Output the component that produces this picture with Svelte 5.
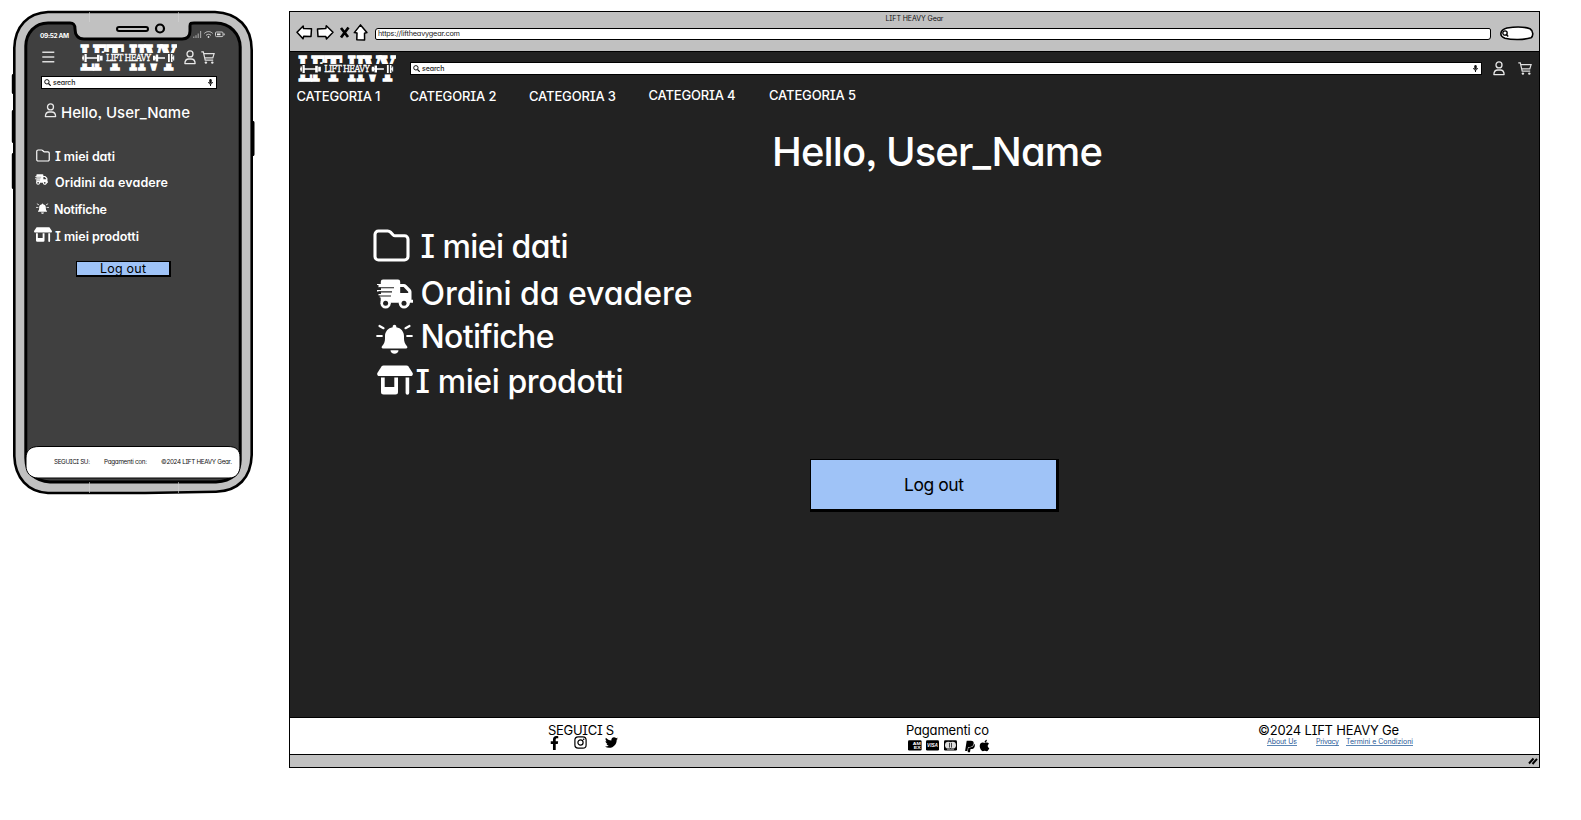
<script>
  const categories = [
    { label: 'CATEGORIA 1', w: 84 },
    { label: 'CATEGORIA 2', w: 87 },
    { label: 'CATEGORIA 3', w: 87 },
    { label: 'CATEGORIA 4', w: 87 },
    { label: 'CATEGORIA 5', w: 87 }
  ];
  const desktopMenu = [
    { icon: 'folder', label: 'I miei dati', w: 148 },
    { icon: 'truck', label: 'Ordini da evadere', w: 272 },
    { icon: 'bell', label: 'Notifiche', w: 134 },
    { icon: 'store', label: 'I miei prodotti', w: 208 }
  ];
  const phoneMenu = [
    { icon: 'folder', label: 'I miei dati', w: 60 },
    { icon: 'truck', label: 'Oridini da evadere', w: 113 },
    { icon: 'bell', label: 'Notifiche', w: 53 },
    { icon: 'store', label: 'I miei prodotti', w: 84 }
  ];

  // Tracks a label out or in so that it takes up the given width.
  function fit(node, width) {
    const n = node.textContent.length;
    const natural = node.getBoundingClientRect().width;
    node.style.letterSpacing = `${(width - natural) / (n - 1)}px`;
    node.style.marginRight = `${-(width - natural) / (n - 1)}px`;
  }
</script>

{#snippet logo()}
  <svg class="logo" viewBox="0 0 98 27" preserveAspectRatio="none">
    <g class="slab">
      <text x="1" y="26" textLength="14" lengthAdjust="spacingAndGlyphs">L</text>
      <text x="13.500" y="26" textLength="13.500" lengthAdjust="spacingAndGlyphs">F</text>
      <text x="27.500" y="26" textLength="17" lengthAdjust="spacingAndGlyphs">T</text>
      <text x="50" y="26" textLength="17" lengthAdjust="spacingAndGlyphs">H</text>
      <text x="66" y="26" textLength="17" lengthAdjust="spacingAndGlyphs">V</text>
      <text x="81.500" y="26" textLength="16" lengthAdjust="spacingAndGlyphs">Y</text>
    </g>
    <rect class="band" x="0" y="9" width="98" height="10.400" />
    <text class="small" x="27" y="17.400" textLength="45" lengthAdjust="spacing">LIFT HEAVY</text>
    <path d="M3 14h2M7 14h12M74 14h12M93 14h2" stroke="#fff" stroke-width="1.400" />
    <path d="M3.500 11.500h1.300v5H3.500zM5.500 10h2.200v8H5.500zM18 10.800h2.600v6.600H18zM21 11.800h2.600v4.600H21zM74 11.800h2.400v4.600H74zM76.800 10.600h2.400v7h-2.400zM89 10h1.800v8H89zM92 10h1.500v8H92zM94.200 11.500h1v5h-1z" fill="#fff" />
  </svg>
{/snippet}

{#snippet icon(name)}
  {#if name === 'folder'}
    <svg class="icon folder" viewBox="0 0 37 33"><path d="M5.500 2h9.200c1.200 0 2 .4 2.800 1.200l2.700 2.800c.5.5 1 .7 1.800.7h9.500a3.500 3.500 0 0 1 3.500 3.500v17.300a3.500 3.500 0 0 1-3.500 3.500h-26A3.500 3.500 0 0 1 2 27.500V5.500A3.500 3.500 0 0 1 5.500 2z" fill="none" stroke="#fff" stroke-width="3.100" /></svg>
  {:else if name === 'truck'}
    <svg class="icon truck" viewBox="0 0 36 30"><path d="M6 .5h15a2.200 2.200 0 0 1 2.200 2.200V5h3.600c1 0 1.800.3 2.500 1l4.200 4.300c.7.7 1 1.500 1 2.500v8h1a1 1 0 0 1 0 3h-2.600a5 5 0 0 1-10 0h-9.500a5 5 0 0 1-9.700-.8V18.500h-1v-1.900H1.500v-1.600H4v-2.400H0V11h4V8.500H1.500V6H0V5h3.800V2.700A2.200 2.200 0 0 1 6 .5zM23.200 8v6h8v-1.200L26.600 8z" fill="#fff" fill-rule="evenodd" /><path d="M1.500 8.700H17M1.500 12.900H15M1.500 17H14" class="slit" stroke-width="1.100" /><circle cx="8.600" cy="24.300" r="5.200" fill="#fff" /><circle cx="27" cy="24.300" r="5.200" fill="#fff" /><circle class="hub" cx="8.600" cy="24.300" r="2.500" /><circle class="hub" cx="27" cy="24.300" r="2.500" /></svg>
  {:else if name === 'bell'}
    <svg class="icon bell" viewBox="0 0 37 30"><path d="M18.500.8c1 0 1.800.8 1.800 1.800v.6c4.800.8 7.700 4.500 7.700 9v2.600c0 3 1 5.200 3 7.500.8.900.3 2.300-1 2.300H7c-1.300 0-1.800-1.400-1-2.300 2-2.300 3-4.500 3-7.500v-2.600c0-4.500 2.900-8.200 7.700-9v-.6c0-1 .8-1.800 1.800-1.800zM14.500 26.300h8c0 2-1.800 3.500-4 3.500s-4-1.500-4-3.500z" fill="#fff" /><path d="M3.500 2l4 2.200M33.500 2l-4 2.200M1.200 12h4.600M31.200 12h4.600" stroke="#fff" stroke-width="2.200" stroke-linecap="round" /></svg>
  {:else if name === 'store'}
    <svg class="icon store" viewBox="0 0 36 30"><path d="M6.500.5h23c.9 0 1.500.3 2 1l4 6.200c.9 1.500 0 3.300-1.800 3.300H2.300C.5 11-.4 9.200.5 7.700l4-6.200c.5-.7 1.100-1 2-1z" fill="#fff" /><path d="M4 12.500h3.700V22h9.600v-9.500H21V27a2.500 2.500 0 0 1-2.500 2.500h-12A2.500 2.500 0 0 1 4 27zM28.600 12.500h3.600V28a1.800 1.800 0 0 1-3.600 0z" fill="#fff" /></svg>
  {:else if name === 'user'}
    <svg class="icon user" viewBox="0 0 12 15"><circle cx="6" cy="3.900" r="3" fill="none" stroke="#e8e8e8" stroke-width="1.300" /><path d="M.9 13.600c0-3 1.700-4.600 4-4.600h2.200c2.300 0 4 1.600 4 4.600z" fill="none" stroke="#e8e8e8" stroke-width="1.300" stroke-linejoin="round" /></svg>
  {:else if name === 'cart'}
    <svg class="icon cart" viewBox="0 0 14 13"><path d="M.3.900h2l1.900 8.300h8M2.800 2.600h10.300l-1.300 4.300H3.800" fill="none" stroke="#e0e0e0" stroke-width="1.200" /><circle cx="4.900" cy="11.600" r="1.200" fill="#e8e8e8" /><circle cx="11.300" cy="11.600" r="1.200" fill="#e8e8e8" /></svg>
  {:else if name === 'glass'}
    <svg class="icon glass" viewBox="0 0 7 7"><circle cx="2.900" cy="2.800" r="2.200" fill="none" stroke="#111" stroke-width="1" /><path d="M4.500 4.500l2.200 2.200" stroke="#111" stroke-width="1.200" /></svg>
  {:else if name === 'mic'}
    <svg class="icon mic" viewBox="0 0 5 7"><path d="M1.300 1.200a1.200 1.200 0 0 1 2.400 0v2.100a1.200 1.200 0 0 1-2.400 0z" fill="#111" /><path d="M.5 3c0 2.600 4 2.600 4 0M2.500 5v2" fill="none" stroke="#111" stroke-width="1" /></svg>
  {/if}
{/snippet}

{#snippet search()}
  <div class="search">
    {@render icon('glass')}
    <span use:fit={22.500}>search</span>
    {@render icon('mic')}
  </div>
{/snippet}

<main>
  <section class="phone">
    <svg class="frame" viewBox="0 0 256 496">
      <path d="M13.500 75.500v17M13.500 111.500v30M13.500 154.500v33M252.800 122.500v32" stroke="#000" stroke-width="3.400" stroke-linecap="round" />
      <path d="M48 12H215C238 13 251.700 27 251.700 50V455C251 478 238 491 216 491.800L145 493H48C28 492 15 478 14.300 456V48C15 26 28 13 48 12z" fill="#c1c1c1" stroke="#000" stroke-width="2.600" />
      <path d="M48 23H70C74 23 75 25 75 29C75 35 78 39 84 39H182C188 39 190 36 190 31V26C190 23 191 23 194 23H216C230 23 240 34 240.200 47V460C240 474 231 481 216 482H50C35 481 26 473 25.800 458V46C26 33 35 23 48 23z" fill="#404040" stroke="#000" stroke-width="3" />
      <rect x="117" y="27" width="31" height="4" rx="2" fill="#c1c1c1" stroke="#000" stroke-width="2" />
      <circle cx="160" cy="28.500" r="4" fill="#c1c1c1" stroke="#000" stroke-width="2.200" />
      <path d="M26 458C26 450 31 446.500 39 446.500H228C236 446.500 240 450 240 457V466C240 473 236 478 229 478H38C31 478 26 473 26 466z" fill="#fff" stroke="#000" stroke-width="1" />
      <path d="M89.500 12V22M178.500 12V22M89.500 482V493M178.500 482V493" stroke="#d4d4d4" stroke-width=".6" />
    </svg>
    <div class="status">
      <b use:fit={29}>09:52 AM</b>
      <svg width="32" height="9" viewBox="0 0 32 9">
        <path d="M.8 8V6.500M3 8V5.200M5.200 8V3.400M7.600 8V1" stroke="#a5a5a5" stroke-width="1.100" />
        <path d="M11.300 3.400c2.600-2.400 5.800-2.400 8.400 0M13 5.400c1.700-1.500 3.300-1.500 5 0" fill="none" stroke="#c8c8c8" stroke-width="1" /><circle cx="15.500" cy="7" r=".9" fill="#ddd" />
        <rect x="22.500" y="2" width="7.500" height="4.600" rx="1" fill="none" stroke="#ccc" /><path d="M24 3.500h3.500v1.700H24zM30.700 3.500h.9v1.700h-.9z" fill="#eee" />
      </svg>
    </div>
    <div class="top">
      <svg class="burger" width="13" height="12" viewBox="0 0 13 12"><path d="M.3 1.300h12M.3 6h12M.3 10.700h12" stroke="#ddd" stroke-width="1.400" /></svg>
      {@render logo()}
      {@render icon('user')}
      {@render icon('cart')}
    </div>
    {@render search()}
    <h2>{@render icon('user')}<span use:fit={129}>Hello, User_Name</span></h2>
    <ul>
      {#each phoneMenu as item}
        <li class={item.icon}><i>{@render icon(item.icon)}</i><span use:fit={item.w}>{item.label}</span></li>
      {/each}
    </ul>
    <button><span use:fit={46}>Log out</span></button>
    <footer>
      <span use:fit={36}>SEGUICI SU:</span>
      <span use:fit={43}>Pagamenti con:</span>
      <span use:fit={71}>©2024 LIFT HEAVY Gear.</span>
    </footer>
  </section>

  <section class="browser">
    <header class="chrome">
      <div class="title"><span use:fit={58}>LIFT HEAVY Gear</span></div>
      <div class="toolbar">
        <svg class="controls" width="72" height="17" viewBox="0 0 72 17">
          <g fill="#fff" stroke="#000" stroke-width="1.500" stroke-linejoin="round">
            <path d="M1 8.300L7.200 2L7.500 4.600L15.500 4.800L15 12.400L7.700 12.200L7 14.800z" />
            <path d="M37 8.300L30.300 1.700L29.800 4.600L21.500 5L22 12.600L29.800 12.500L30.500 15z" />
            <path d="M64.500 .9L58.300 8.600L61 9L60.800 15.800L68.600 15.900L68.500 9.200L70.900 8.600z" />
          </g>
          <path d="M45 4L52 13M52.500 3.500L45 13.500" stroke="#000" stroke-width="2.700" />
        </svg>
        <div class="url"><span use:fit={82}>https://liftheavygear.com</span></div>
        <svg width="35" height="15" viewBox="0 0 35 15">
          <path d="M8 2C17 .4 25 .6 31 2.800C34.500 5 34.500 10 32 11.800C25 14 13 14 6 12.300C0 10 .5 4 8 2z" fill="#fff" stroke="#000" stroke-width="1.600" /><circle cx="6" cy="7" r="2.200" fill="none" stroke="#000" stroke-width="1.300" /><path d="M7 8l2.200 2.500" stroke="#000" stroke-width="1.400" />
        </svg>
      </div>
    </header>
    <div class="page">
      <div class="appbar">
        {@render logo()}
        {@render search()}
        {@render icon('user')}
        {@render icon('cart')}
      </div>
      <nav>
        {#each categories as c, i}
          <div class:raised={i > 2}><span use:fit={c.w}>{c.label}</span></div>
        {/each}
      </nav>
      <h1><span use:fit={331}>Hello, User_Name</span></h1>
      <ul>
        {#each desktopMenu as item}
          <li class={item.icon}><i>{@render icon(item.icon)}</i><span use:fit={item.w}>{item.label}</span></li>
        {/each}
      </ul>
      <button><span use:fit={61}>Log out</span></button>
    </div>
    <footer>
      <div class="social">
        <span use:fit={66}>SEGUICI S</span>
        <div>
          <svg class="fb" width="9" height="14" viewBox="0 0 320 512"><path d="M279.140 288l14.220-92.660h-88.910v-60.130c0-25.350 12.420-50.060 52.240-50.060h40.420V6.260S260.430 0 225.360 0c-73.220 0-121.080 44.380-121.080 124.720v70.620H22.890V288h81.390v224h100.170V288z" /></svg>
          <svg class="ig" width="13" height="13" viewBox="0 0 13 13"><rect x=".9" y=".9" width="11.200" height="11.200" rx="3.200" fill="none" stroke="#000" stroke-width="1.200" /><circle cx="6.500" cy="6.500" r="2.600" fill="none" stroke="#000" stroke-width="1.200" /><circle cx="9.700" cy="3.300" r=".8" /></svg>
          <svg class="tw" width="13" height="13" viewBox="0 0 512 512"><path d="M459.370 151.716c.325 4.548.325 9.097.325 13.645 0 138.720-105.583 298.558-298.558 298.558-59.452 0-114.680-17.219-161.137-47.106 8.447.974 16.568 1.299 25.340 1.299 49.055 0 94.213-16.568 130.274-44.832-46.132-.975-84.792-31.188-98.112-72.772 6.498.974 12.995 1.624 19.818 1.624 9.421 0 18.843-1.300 27.614-3.573-48.081-9.747-84.143-51.980-84.143-102.985v-1.299c13.969 7.797 30.214 12.670 47.431 13.319-28.264-18.843-46.781-51.005-46.781-87.391 0-19.492 5.197-37.360 14.294-52.954 51.655 63.675 129.300 105.258 216.365 109.807-1.624-7.797-2.599-15.918-2.599-24.040 0-57.828 46.782-104.934 104.934-104.934 30.213 0 57.502 12.670 76.670 33.137 23.715-4.548 46.456-13.320 66.599-25.340-7.798 24.366-24.366 44.833-46.132 57.827 21.117-2.273 41.584-8.122 60.426-16.243-14.292 20.791-32.161 39.308-52.628 54.253z" /></svg>
        </div>
      </div>
      <div class="pay">
        <span use:fit={83}>Pagamenti co</span>
        <div>
          <svg width="50" height="11" viewBox="0 0 50 11">
            <rect x="0" y=".3" width="13.600" height="10.200" rx="1.300" /><rect x="18" y=".3" width="13" height="10.200" rx="1.300" /><rect x="36" y=".3" width="13" height="10.200" rx="1.300" />
            <text x="4.800" y="5.200" class="card" textLength="8" lengthAdjust="spacingAndGlyphs">AM</text>
            <text x="5.800" y="9.200" class="card" textLength="7" lengthAdjust="spacingAndGlyphs">EX</text>
            <text x="19" y="7.300" class="card visa" textLength="11" lengthAdjust="spacingAndGlyphs">VISA</text>
            <circle cx="40.400" cy="5.200" r="3.400" fill="#ddd" /><circle cx="44.600" cy="5.200" r="3.400" fill="#ddd" /><path d="M41.500 2.800v4.800M43.500 2.800v4.800" stroke="#000" stroke-width=".7" /><path d="M39 9.500h7" stroke="#bbb" stroke-width=".6" />
          </svg>
          <svg class="pp" width="10" height="13" viewBox="0 0 384 512"><path d="M111.400 295.900c-3.500 19.200-17.400 108.700-21.500 134-.3 1.800-1 2.500-3 2.500H12.300c-7.600 0-13.100-6.600-12.100-13.900L58.800 46.600c1.500-9.600 10.100-16.900 20-16.900 152.300 0 165.100-3.700 204 11.400 60.100 23.300 65.600 79.500 44 140.300-21.500 62.600-72.500 89.500-140.100 90.300-43.400.7-69.500-7-75.300 24.200zM357.100 152c-1.800-1.300-2.500-1.800-3 1.300-2 11.400-5.100 22.500-8.800 33.600-39.900 113.800-150.500 103.900-204.500 103.900-6.100 0-10.100 3.300-10.900 9.400-22.600 140.400-27.100 169.700-27.100 169.700-1 7.100 3.500 12.900 10.600 12.900h63.500c8.600 0 15.700-6.300 17.400-14.900.7-5.400-1.100 6.100 14.400-91.300 4.600-22 14.300-19.700 29.300-19.700 71 0 126.400-28.800 142.900-112.300 6.500-34.800 4.600-71.400-23.800-92.600z" /></svg>
          <svg class="ap" width="11" height="13" viewBox="0 0 384 512"><path d="M318.700 268.700c-.2-36.700 16.400-64.400 50-84.800-18.800-26.900-47.200-41.700-84.700-44.600-35.500-2.800-74.300 20.700-88.500 20.700-15 0-49.400-19.700-76.400-19.700C63.300 141.200 4 184.800 4 273.500q0 39.300 14.400 81.200c12.800 36.700 59 126.700 107.200 125.200 25.200-.6 43-17.900 75.800-17.900 31.800 0 48.300 17.900 76.400 17.900 48.600-.7 90.400-82.500 102.600-119.300-65.200-30.700-61.700-90-61.700-91.900zm-56.600-164.200c27.300-32.400 24.800-61.900 24-72.500-24.100 1.400-52 16.400-67.900 34.900-17.500 19.800-27.800 44.300-25.600 71.900 26.100 2 49.900-11.400 69.500-34.300z" /></svg>
        </div>
      </div>
      <div class="legal">
        <span use:fit={141}>©2024 LIFT HEAVY Ge</span>
        <div>
          <a href="#about"><span use:fit={30}>About Us</span></a>
          <a href="#privacy"><span use:fit={23}>Privacy</span></a>
          <a href="#terms"><span use:fit={67}>Termini e Condizioni</span></a>
        </div>
      </div>
    </footer>
    <div class="bottom">
      <svg width="10" height="8" viewBox="0 0 10 8"><path d="M1 6.500L5.500 1.500M4.500 7L9 1.800" stroke="#000" stroke-width="2" /></svg>
    </div>
  </section>
</main>

<style>
  :global(body) { background: #fff; }
  main {
    position: relative; z-index: 0;
    display: flex;
    width: 1581px;
    height: 820px;
    overflow: hidden;
    font-family: Inter, "Open Sans", sans-serif;
    font-feature-settings: "cv11", "cv08", "ss03";
    color: #fff;
  }
  main * { box-sizing: border-box; }
  span, b { display: inline-block; white-space: pre; }
  svg { display: block; flex: none; }
  ul, h1, h2 { margin: 0; padding: 0; list-style: none; }
  i { display: flex; align-items: center; }
  button {
    display: flex; align-items: center; justify-content: center;
    padding: 0; border: 1px solid #000; border-radius: 0;
    background: #9fc3f7; color: #000; font-family: inherit; font-feature-settings: inherit;
  }
  .slab text { font: bold 34px "DejaVu Serif", serif; fill: #fff; stroke: #fff; stroke-width: 1.7; }
  .small { font-family: "DejaVu Serif Condensed", "DejaVu Serif", serif; font-stretch: condensed; font-size: 8.800px; fill: #fff; stroke: #fff; stroke-width: .3; }
  .band { fill: var(--bg); }
  .hub { fill: var(--bg); }
  .slit { stroke: var(--bg); }
  .user { width: 12px; height: 15px; }
  .cart { width: 14px; height: 13px; }
  .glass { width: 7px; height: 7px; }
  .mic { width: 5px; height: 7px; margin-left: auto; }
  .search {
    display: flex; align-items: center; gap: 2px;
    padding: 0 3px 0 2px; background: #fff; border: 1px solid #000;
    color: #222; font-size: 7px; font-weight: 500; line-height: 10px;
  }

  .phone {
    --bg: #404040;
    position: relative; flex: none;
    display: flex; flex-direction: column;
    width: 256px; height: 496px; padding: 28px 0 0 0;
  }
  .frame { position: absolute; inset: 0; width: 256px; height: 496px; z-index: -1; }
  .status { display: flex; align-items: center; justify-content: space-between; height: 14px; padding: 0 31px 0 40px; font-size: 6.500px; }
  .status b { padding-top: 1px; }
  .status svg { margin-top: -1px; }
  .top { display: flex; align-items: center; height: 30px; padding-left: 42px; }
  .top .logo { width: 98px; height: 27px; margin: 0 7px 0 24px; }
  .top .cart { margin-left: 5px; }
  .phone .search { width: 176px; height: 13px; margin: 4px 0 0 41px; }
  .phone h2 { display: flex; align-items: center; gap: 4px; height: 22px; margin: 12px 0 0 44px; font-size: 15px; font-weight: 500; line-height: 20px; }
  .phone h2 span { padding-top: 1px; }
  .phone h2 .user { margin-top: -3px; width: 13px; }
  .phone ul { margin-top: 20px; font-size: 12.500px; font-weight: 600; }
  .phone li { display: flex; align-items: center; height: 26.600px; padding-left: 34px; }
  .phone i { width: 21px; }
  .phone li.bell i { width: 20px; }
  .phone .icon.folder { width: 14px; height: 13px; margin: -2px 0 0 2px; }
  .phone .icon.truck { width: 13px; height: 11px; margin: -6px 0 0 1px; }
  .phone .icon.bell { width: 13px; height: 11px; margin: -1px 0 0 2px; }
  .phone .icon.store { width: 18px; height: 15px; margin: -4px 0 0 0; }
  .phone button { width: 95px; height: 16px; margin: 12px 0 0 76px; border: 1.500px solid #000; border-right-width: 2px; border-bottom-width: 2px; font-size: 12.500px; line-height: 12px; }
  .phone footer { display: flex; align-items: center; gap: 14px; height: 32px; margin: 169px 0 0 54px; color: #111; font-size: 6.300px; }

  .browser {
    --bg: #222;
    flex: none; display: flex; flex-direction: column;
    width: 1251px; height: 757px; margin: 11px 0 0 33px;
    border: 1.500px solid #000;
  }
  .chrome { height: 40px; background: #c1c1c1; border-bottom: 1.500px solid #000; }
  .title { display: flex; justify-content: center; height: 13px; font-size: 7px; line-height: 13px; color: #111; }
  .toolbar { display: flex; align-items: center; padding: 0 5px 0 6px; height: 17px; }
  .controls { margin-top: -3px; }
  .url { flex: 1; height: 12px; margin: 0 8px 0 7px; padding-left: 2px; background: #fff; border: 1.500px solid #000; border-radius: 3px 2px 3px 2px; color: #222; font-size: 7.300px; line-height: 9px; }
  .page { height: 665px; background: #222; }
  .appbar { display: flex; align-items: center; height: 33px; padding-left: 7px; }
  .appbar .logo { width: 99px; height: 27px; }
  .appbar .search { width: 1072px; height: 13px; margin: 0 11px 0 14px; }
  .appbar .cart { margin-left: 13px; }
  nav { display: grid; grid-template-columns: 113px 119.500px 119.500px 120.500px auto; height: 17px; margin: 3px 0 0 6.500px; font-size: 13px; font-weight: 500; line-height: 17px; }
  nav div.raised { margin-top: -1px; }
  h1 { display: flex; justify-content: center; height: 50px; margin: 22px 0 0 45px; font-size: 40px; font-weight: 500; line-height: 50px; }
  .page h1 { width: 1205px; }
  .page ul { margin: 45px 0 0 83px; font-size: 32px; font-weight: 500; }
  .page li { display: flex; align-items: center; height: 47px; }
  .page li > span { padding-top: 2px; }
  .page li.bell { height: 39px; }
  .page li.store { height: 51px; }
  .page i { width: 47.500px; }
  .page li.store i { width: 42.500px; }
  .page .icon.folder { width: 37px; height: 33px; }
  .page .icon.truck { width: 36px; height: 30px; margin: 2px 0 0 3.500px; }
  .page .icon.bell { width: 37px; height: 30px; margin: 6px 0 0 3px; }
  .page .icon.store { width: 36px; height: 30px; margin: -2px 0 0 3.500px; }
  .page button { width: 249px; height: 53px; margin: 53px 0 0 520px; border-right-width: 3px; border-bottom-width: 3px; font-size: 17.500px; }
  .page button span { padding: 0 0 1px 1px; }
  .browser footer { display: flex; height: 38px; padding-top: 5px; background: #fff; border-top: 1.500px solid #000; border-bottom: 1.500px solid #000; color: #000; font-size: 13px; line-height: 14px; }
  .browser footer > div > div { display: flex; }
  .social { width: 358px; margin-left: 258px; }
  .social > div { padding-left: 2px; margin-top: -1px; }
  .ig { margin-left: 15px; }
  .tw { margin-left: 18px; }
  .pay { width: 352px; }
  .pay > div { padding: 3px 0 0 2px; }
  .pp { margin: 0 0 0 7px; }
  .ap { margin: -1px 0 0 4px; }
  .card { font: bold 4px "Liberation Sans", sans-serif; fill: #fff; }
  .visa { font-size: 5px; font-style: italic; }
  .legal > div { padding: 1px 0 0 9px; font-size: 7px; line-height: 8px; }
  .legal a { margin-right: 7px; color: #1f5796; }
  .legal a span { height: 8px; border-bottom: 1px solid #5b86b5; }
  .legal a:first-child { margin-right: 19px; }
  .bottom { flex: 1; display: flex; align-items: center; justify-content: flex-end; padding-right: 1px; background: #c1c1c1; }
</style>
